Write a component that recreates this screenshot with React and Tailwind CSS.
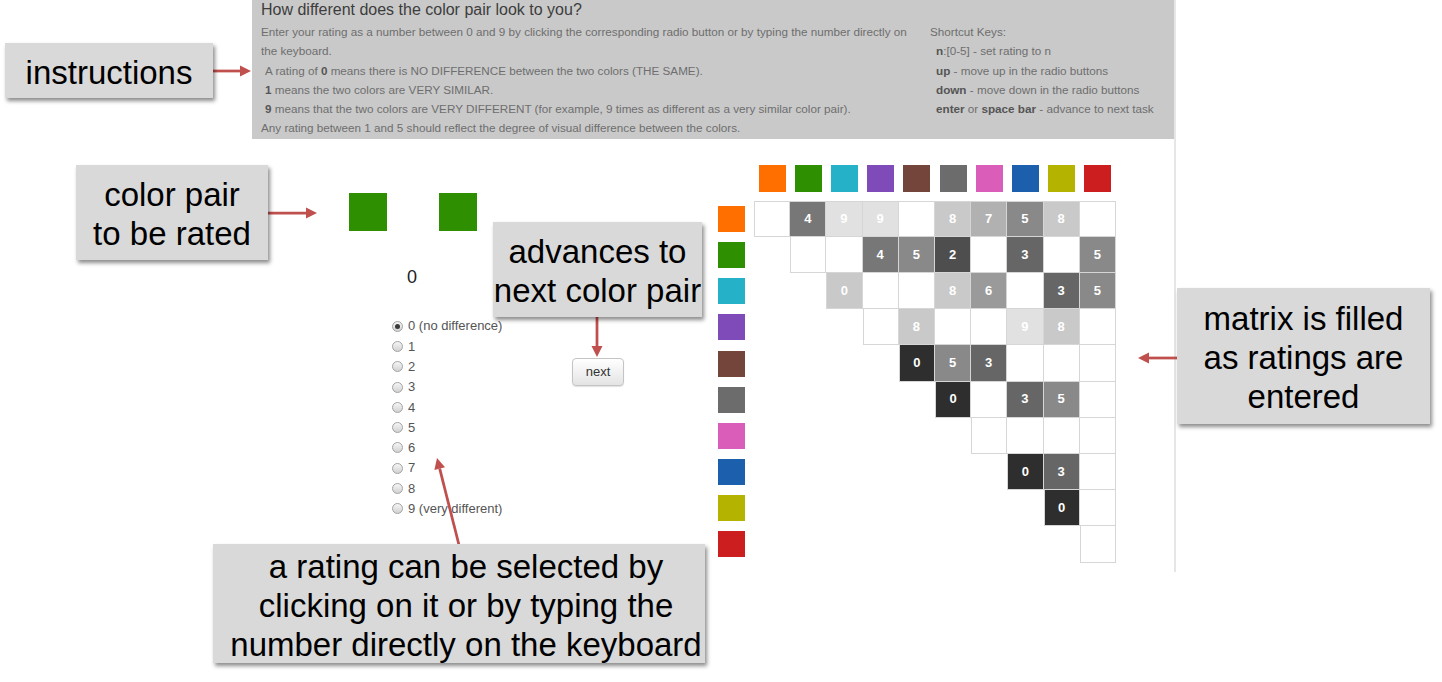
import React from 'react';

// colour swatches for the matrix header / rows
const swatches = [
  'bg-[#ff6f00]',
  'bg-[#2e8f00]',
  'bg-[#25b1c7]',
  'bg-[#7f4bb8]',
  'bg-[#74453b]',
  'bg-[#6c6c6c]',
  'bg-[#d95db9]',
  'bg-[#1c5fad]',
  'bg-[#b4b400]',
  'bg-[#cc1e1e]',
];

const shade = {
  '': 'bg-white',
  '0': 'bg-[#2e2e2e]',
  '0*': 'bg-[#c9c9c9]',
  '2': 'bg-[#4e4e4e]',
  '3': 'bg-[#666666]',
  '4': 'bg-[#777777]',
  '5': 'bg-[#898989]',
  '6': 'bg-[#9a9a9a]',
  '7': 'bg-[#b1b1b1]',
  '8': 'bg-[#c9c9c9]',
  '9': 'bg-[#e1e1e1]',
};

const colStart = [
  'col-start-2', 'col-start-3', 'col-start-4', 'col-start-5', 'col-start-6',
  'col-start-7', 'col-start-8', 'col-start-9', 'col-start-10', 'col-start-11',
];

// upper triangle: row i holds columns i..9
const matrix = [
  ['', '4', '9', '9', '', '8', '7', '5', '8', ''],
  ['', '', '4', '5', '2', '', '3', '', '5'],
  ['0*', '', '', '8', '6', '', '3', '5'],
  ['', '8', '', '', '9', '8', ''],
  ['0', '5', '3', '', '', ''],
  ['0', '', '3', '5', ''],
  ['', '', '', ''],
  ['0', '3', ''],
  ['0', ''],
  [''],
];

const ratings = ['0 (no difference)', '1', '2', '3', '4', '5', '6', '7', '8', '9 (very different)'];

function Arrow({ x1, y1, x2, y2 }) {
  const dx = x2 - x1;
  const dy = y2 - y1;
  const len = Math.hypot(dx, dy);
  const ux = dx / len;
  const uy = dy / len;
  const bx = x2 - ux * 11;
  const by = y2 - uy * 11;
  const px = -uy * 5.5;
  const py = ux * 5.5;
  return (
    <g>
      <line x1={x1} y1={y1} x2={bx} y2={by} stroke="#c0504d" strokeWidth="2.75" />
      <polygon points={`${x2},${y2} ${bx + px},${by + py} ${bx - px},${by - py}`} fill="#c0504d" />
    </g>
  );
}

function Callout({ className, children }) {
  return (
    <div
      className={`absolute flex items-center justify-center pt-[3px] bg-[#d9d9d9] shadow-[2px_3px_4px_rgba(0,0,0,0.45)] text-center text-[33px] leading-[39px] text-black whitespace-nowrap ${className}`}
    >
      <div>{children}</div>
    </div>
  );
}

export default function App() {
  return (
    <div className="relative w-[1442px] h-[682px] bg-white overflow-hidden font-['Liberation_Sans',Arial,sans-serif]">
      <div className="ml-[252px] w-[924px] h-[572px] border-r-2 border-[#e6e6e6]">
        {/* instructions panel */}
        <section className="h-[139px] bg-[#c9c9c9] pl-[9px]">
          <h1 className="text-[16px] leading-[20px] text-[#3d3d3d]">How different does the color pair look to you?</h1>
          <div className="mt-[2px] flex text-[11.7px] leading-[19.3px] text-[#6e6e6e] whitespace-nowrap">
            <div className="w-[669px]">
              <p>Enter your rating as a number between 0 and 9 by clicking the corresponding radio button or by typing the number directly on</p>
              <p>the keyboard.</p>
              <p className="pl-[4px]">A rating of <b className="text-[#555]">0</b> means there is NO DIFFERENCE between the two colors (THE SAME).</p>
              <p className="pl-[4px]"><b className="text-[#555]">1</b> means the two colors are VERY SIMILAR.</p>
              <p className="pl-[4px]"><b className="text-[#555]">9</b> means that the two colors are VERY DIFFERENT (for example, 9 times as different as a very similar color pair).</p>
              <p>Any rating between 1 and 5 should reflect the degree of visual difference between the colors.</p>
            </div>
            <div>
              <p>Shortcut Keys:</p>
              <p className="pl-[6px]"><b className="text-[#555]">n</b>:[0-5] - set rating to n</p>
              <p className="pl-[6px]"><b className="text-[#555]">up</b> - move up in the radio buttons</p>
              <p className="pl-[6px]"><b className="text-[#555]">down</b> - move down in the radio buttons</p>
              <p className="pl-[6px]"><b className="text-[#555]">enter</b> or <b className="text-[#555]">space bar</b> - advance to next task</p>
            </div>
          </div>
        </section>

        <div className="flex items-start">
          {/* rating task */}
          <div className="w-[466px]">
            <div className="ml-[97px] mt-[54px] flex gap-[52px]">
              <div className="w-[38px] h-[38px] bg-[#2e8f00]" />
              <div className="w-[38px] h-[38px] bg-[#2e8f00]" />
            </div>
            <div className="ml-[155px] mt-[34px] text-[18px] leading-[24px] text-[#222]">0</div>
            <div className="mt-[27px] ml-[140px] flex items-start">
              <div className="w-[180px]">
                {ratings.map((r, i) => (
                  <div key={r} className="h-[20.3px] flex items-center gap-[5px] text-[13px] text-[#555]">
                    <span className="w-[11px] h-[11px] rounded-full border border-[#a2a2a2] bg-linear-to-b from-[#f6f6f6] to-[#d2d2d2] flex items-center justify-center">
                      {i === 0 && <span className="w-[5px] h-[5px] rounded-full bg-[#3a3a3a]" />}
                    </span>
                    <span>{r}</span>
                  </div>
                ))}
              </div>
              <button className="mt-[42px] w-[52px] h-[28px] rounded-[4px] border border-[#c4c4c4] bg-linear-to-b from-white to-[#e4e4e4] shadow-[0_1px_1px_rgba(0,0,0,0.12)] text-[13px] text-[#333]">
                next
              </button>
            </div>
          </div>

          {/* ratings matrix */}
          <div className="mt-[25.7px] grid grid-cols-[36px_repeat(10,36.2px)]">
            <div className="h-[36px]" />
            {swatches.map((s) => (
              <div key={s} className="h-[36px] flex justify-center items-start">
                <div className={`w-[27px] h-[27px] ${s}`} />
              </div>
            ))}
            {matrix.map((row, i) => (
              <React.Fragment key={i}>
                <div className="col-start-1 h-[36.2px] flex items-center">
                  <div className={`w-[27px] h-[26px] ${swatches[i]}`} />
                </div>
                {row.map((v, j) => (
                  <div
                    key={j}
                    className={`h-[36.2px] flex items-center justify-center border-r border-b border-[#d6d6d6] text-[13px] font-bold text-white ${shade[v]} ${j === 0 ? colStart[i] + ' border-l' : ''} ${i === 0 ? 'border-t' : ''}`}
                  >
                    {v.replace('*', '')}
                  </div>
                ))}
              </React.Fragment>
            ))}
          </div>
        </div>
      </div>

      {/* annotation arrows */}
      <svg className="absolute inset-0 pointer-events-none" width="1442" height="682">
        <Arrow x1={212} y1={71} x2={251} y2={71} />
        <Arrow x1={267} y1={213} x2={317} y2={213} />
        <Arrow x1={597} y1={316} x2={597} y2={357} />
        <Arrow x1={1178} y1={358} x2={1138} y2={358} />
        <Arrow x1={459} y1={545} x2={437} y2={458} />
      </svg>

      {/* annotation callouts */}
      <Callout className="left-[5px] top-[43px] w-[208px] h-[55px]">instructions</Callout>
      <Callout className="left-[76px] top-[165px] w-[192px] h-[95px]">color pair<br />to be rated</Callout>
      <Callout className="left-[493px] top-[222px] w-[209px] h-[95px]">advances to<br />next color pair</Callout>
      <Callout className="left-[1177px] top-[288px] w-[253px] h-[136px]">matrix is filled<br />as ratings are<br />entered</Callout>
      <Callout className="left-[213px] top-[544px] w-[492px] h-[119px] pl-[14px]">a rating can be selected by<br />clicking on it or by typing the<br />number directly on the keyboard</Callout>
    </div>
  );
}
